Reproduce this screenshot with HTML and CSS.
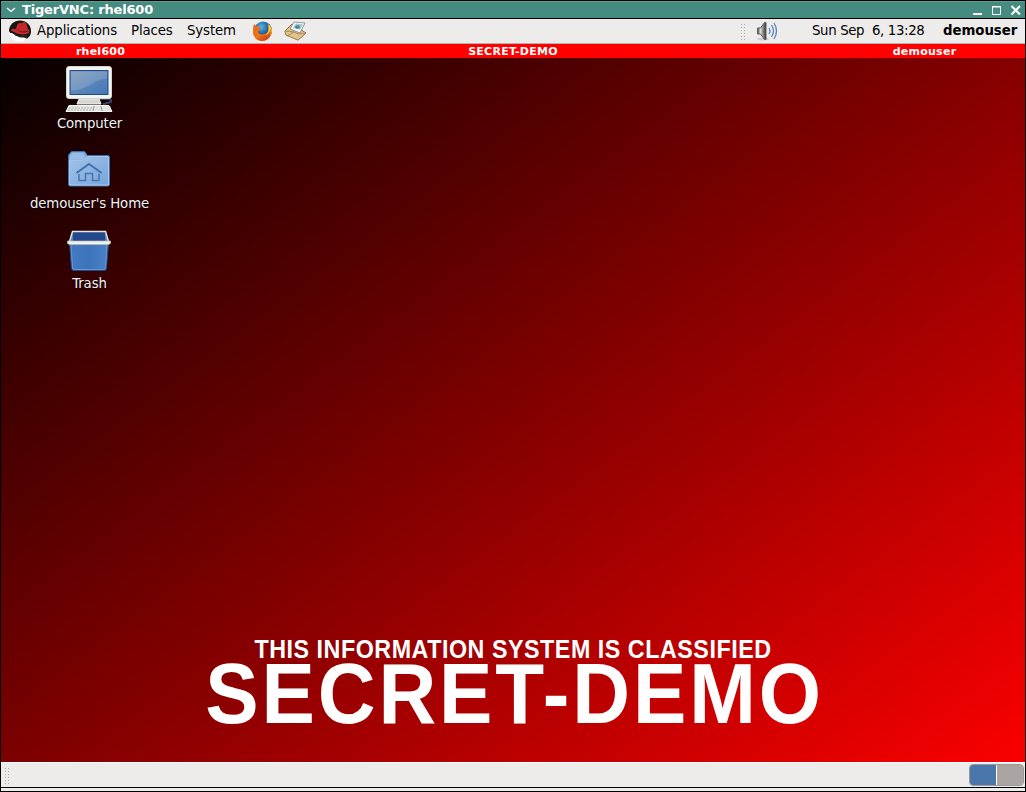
FILE: index.html
```html
<!DOCTYPE html>
<html lang="en">
<head>
<meta charset="utf-8">
<title>TigerVNC: rhel600</title>
<link rel="stylesheet" href="styles.css">
</head>
<body>
<div class="window">
  <header class="titlebar">
    <svg class="chevron" width="10" height="6" viewBox="0 0 10 6"><path d="M1 1l4 3.500L9 1" fill="none" stroke="#fff" stroke-width="1.300"/></svg>
    <span class="title">TigerVNC: rhel600</span>
    <svg class="controls" width="48" height="12" viewBox="0 0 48 12"><path d="M0 9h9v2H0z" fill="#fff"/><path d="M19.500 3v7.500h8V3zM19 2.500h9" fill="none" stroke="#fff"/><path d="M38.500 2l8.500 8.500M47 2l-8.500 8.500" stroke="#fff" stroke-width="2"/></svg>
  </header>
  <main class="screen">
    <nav class="panel">
      <svg class="hat" width="24" height="22" viewBox="0 0 24 22">
        <path d="M1 11C1 5 6 .5 12 .5S23 5 23 11c0 5-3 8-8 9L3 14z" fill="#151515"/>
        <path d="M1.500 13c.5 5 5 8.500 10.500 8.500 3 0 5-1 6.500-2.500L18 16l-6 1-5-2-3-2z" fill="#fff"/>
        <path d="M3 10c1-2 3-1 5-1 1-3 1-6 4-6 2 1 2-1 4-1 2 0 3 3 4 7 2 1 2 4-1 5-5 1-10 0-13-2-2-1-3-1-3-2z" fill="#c4292c"/>
        <path d="M8 8.500c2 3 7 4 12 2l.3 1C15 13.500 10 12 8 8.500z" fill="#62181a"/>
        <path d="M7 13.500c3 2 9 2.500 13 1l-2 4-2-1-4 0-2-1-3-1z" fill="#242424"/>
      </svg>
      <span class="menu apps">Applications</span><span class="menu places">Places</span><span class="menu system">System</span>
      <svg class="firefox" width="21" height="21" viewBox="0 0 21 21">
        <defs><linearGradient id="fox" x2=".7" y2="1"><stop stop-color="#e8651b"/><stop offset=".6" stop-color="#ee7417"/><stop offset="1" stop-color="#c83b17"/></linearGradient>
        <radialGradient id="globe" cx=".4" cy=".3"><stop stop-color="#51b7e6"/><stop offset="1" stop-color="#164982"/></radialGradient></defs>
        <circle cx="11" cy="9.500" r="9" fill="url(#globe)"/>
        <path d="M2 3l2 2 3-1-1 2 3 1-1 2-2 1c0 3 3 4 6 3 3 0 5-3 5-6l-1-4c4 3 5 7 3 11-2 4-5 6-9 6-5 0-9-4-9-9 0-3 0-5 1-8z" fill="url(#fox)"/>
        <path d="M16 3c4 3 5 8 2 12 1-3 1-5 0-7 0 3-2 6-5 6 4-2 4-7 3-11z" fill="#fbd13d"/>
      </svg>
      <svg class="mail" width="23" height="20" viewBox="0 0 23 20">
        <path d="M1 10l7-7 14 9-8 7L2 14z" fill="#e0bf87" stroke="#8c7450"/>
        <path d="M6 8l4-7 11 1-5 10z" fill="#f3f7f4" stroke="#77817b" stroke-width=".8"/>
        <path d="M9 7l3-4.500 7 1-3 5z" fill="#9cc4d8"/><ellipse cx="13.500" cy="6" rx="2.300" ry="1.700" fill="#3479aa"/><path d="M12 5l3-1-1 3z" fill="#69a05b"/>
        <path d="M1 10l9 1 4 2 8-1-8 7-12-5zM10 11l-7 4" fill="#e3c28b" stroke="#a0804f" stroke-width=".8"/>
      </svg>
      <span class="grip"></span>
      <svg class="volume" width="22" height="20" viewBox="0 0 22 20">
        <defs><linearGradient id="metal"><stop stop-color="#444"/><stop offset=".35" stop-color="#ddd"/><stop offset=".65" stop-color="#888"/><stop offset="1" stop-color="#333"/></linearGradient></defs>
        <ellipse cx="7" cy="18" rx="6" ry="1.500" fill="#ccc"/>
        <path d="M1.500 7h3l4-5.500h1.500v17H8.500L4.500 13h-3z" fill="url(#metal)" stroke="#5a5c59"/>
        <path d="M13 7q2 3 0 6M15.500 4q4 6 0 12M18 2q5 8 0 16" fill="none" stroke="#5682bb" stroke-width="1.300"/>
      </svg>
      <span class="clock">Sun Sep&nbsp; 6, 13:28</span>
      <strong class="user">demouser</strong>
    </nav>
    <div class="banner"><span class="host">rhel600</span><span class="level">SECRET-DEMO</span><span class="login">demouser</span></div>
    <section class="desktop">
      <div class="icons">
        <div class="launcher">
          <svg width="48" height="48" viewBox="0 0 48 48">
            <defs><linearGradient id="screen" y2="1"><stop stop-color="#7393bc"/><stop offset="1" stop-color="#4479b6"/></linearGradient><linearGradient id="shine" y2="1"><stop stop-color="#9caec8"/><stop offset="1" stop-color="#6f97c7"/></linearGradient></defs>
            <path d="M34 33h9q4 0 3 3l-7 2 1 3h6" fill="none" stroke="#31456d" stroke-width="2"/>
            <path d="M14 33h20l2 5H12z" fill="#d5d8d1" stroke="#eff0ec"/>
            <rect x="1.500" y=".5" width="45" height="32" rx="2.500" fill="#f4f5f1" stroke="#d2d5cd"/>
            <rect x="5" y="4.500" width="38" height="24" fill="url(#screen)" stroke="#204a87"/>
            <path d="M6 5.500h36v7c-12 0-20 12-36 12z" fill="url(#shine)" opacity=".65"/>
            <path d="M4 39.500h40l3 6H1z" fill="#e2e5df" stroke="#f6f7f4"/><path d="M4 42h24M3 44h24" stroke="#b6bbb3" stroke-dasharray="2 1"/><path d="M29 40l-1 5M36 40l1 5" stroke="#969b92"/>
          </svg><span>Computer</span>
        </div>
        <div class="launcher">
          <svg width="48" height="48" viewBox="0 0 48 48">
            <defs><linearGradient id="folder" y2="1"><stop stop-color="#a2c2e7"/><stop offset="1" stop-color="#78a6db"/></linearGradient></defs>
            <path d="M3.500 12V9l3-3.500h13l3 4h20.500q1.500 0 1.500 2v27q0 1.500-2 1.500H5q-1.500 0-1.500-2z" fill="#7ca7da" stroke="#3d70ae"/>
            <path d="M4.500 14h14l4-3.500h20.500q.5 0 .5 2v26.500H4.500z" fill="url(#folder)" stroke="#a9c8ed"/>
            <path d="M4.500 11l3-4h11l2 4-2 2h-14z" fill="#99bce5"/>
            <path d="M11.500 27l12.500-9 12.500 9" fill="none" stroke="#4170af" stroke-width="2"/>
            <path d="M14 28v6.500h6.500v-7h7v7H34V28" fill="none" stroke="#4775b2" stroke-width="1.500"/>
          </svg><span>demouser's Home</span>
        </div>
        <div class="launcher">
          <svg width="48" height="48" viewBox="0 0 48 48">
            <defs><linearGradient id="bin"><stop stop-color="#447bc2"/><stop offset=".5" stop-color="#3c73bb"/><stop offset="1" stop-color="#4b83c7"/></linearGradient></defs>
            <path d="M4.500 16h39l-2 26q0 2.500-2 2.500h-31q-2 0-2-2.500z" fill="url(#bin)" stroke="#204a87"/>
            <path d="M6 18l1.500 23.500q0 2 2 2h29q2 0 2-2L42 18" fill="none" stroke="#6698d2"/>
            <path d="M5 16L8 5h32l3 11z" fill="#24488b"/><path d="M5 16l3-10v10zM43 16L40 6v10z" fill="#5083bf"/>
            <path d="M4.500 15.500l3-10h33l3 10" fill="none" stroke="#e4e6e0" stroke-width="1.500"/>
            <path d="M2.500 15h43v2.500l-2 1h-39l-2-1z" fill="#f0f1ed" stroke="#b7bab3" stroke-width=".7"/>
          </svg><span>Trash</span>
        </div>
      </div>
      <div class="notice"><div class="statement">THIS INFORMATION SYSTEM IS CLASSIFIED</div><div class="classification">SECRET-DEMO</div></div>
    </section>
    <footer class="taskbar"><span class="grip"></span><div class="workspaces"><i class="current"></i><i></i></div></footer>
  </main>
  <div class="frame-bottom"></div>
</div>
</body>
</html>
```

FILE: styles.css
```css
* { box-sizing: border-box; }
body { margin: 0; font: 13.333px "DejaVu Sans", sans-serif; white-space: nowrap; }
svg { display: block; flex: none; }
.window { width: 1026px; height: 792px; border: 1px solid #000; overflow: hidden; }
.titlebar { height: 18px; display: flex; align-items: center; background: #458b7f; border-top: 1px solid #619c92; border-bottom: 1px solid #000; color: #fff; padding-left: 5px; }
.chevron { margin-right: 6px; }
.title { font-size: 13px; font-weight: bold; line-height: 16px; letter-spacing: -.18px; }
.controls { margin-left: auto; margin-right: 4px; }
.screen { height: 768px; display: flex; flex-direction: column; background: linear-gradient(to bottom right, #000, #f00); }
.panel { height: 25px; flex: none; display: flex; align-items: center; background: #edeceb; border-bottom: 1px solid #b5b3b0; color: #000; padding-left: 7px; }
.menu { flex: none; line-height: 22px; letter-spacing: -.12px; }
.apps { width: 99px; padding-left: 5px; }
.places { width: 56px; }
.system { width: 65px; }
.firefox { margin-right: 11px; }
.grip { flex: none; width: 5px; height: 17px; background: radial-gradient(circle, #aaa 0 .8px, transparent 1px) 0 0 / 3px 3px; }
.panel .grip { margin-left: 433px; }
.volume { margin-left: 11px; }
.clock { flex: none; margin-left: 34px; width: 131px; padding-bottom: 2px; letter-spacing: -.36px; }
.user { padding-bottom: 2px; letter-spacing: -.05px; }
.banner { height: 14px; flex: none; display: grid; grid-template-columns: 199px 626px 199px; text-align: center; background: #f00; color: #fff; font-size: 11px; font-weight: bold; line-height: 16px; letter-spacing: .25px; }
.login { margin-left: -2px; }
.desktop { height: 704px; flex: none; display: flex; flex-direction: column; justify-content: space-between; }
.icons { padding-top: 8px; margin-left: 23px; width: 130px; }
.launcher { height: 80px; display: flex; flex-direction: column; align-items: center; color: #f0f0f0; text-shadow: 1px 1px 1px #000; }
.launcher span { line-height: 20px; padding-left: 1px; letter-spacing: -.13px; }
.notice { text-align: center; color: #fff; font-family: "Liberation Sans", sans-serif; font-weight: bold; height: 128px; }
.statement { font-size: 23.3px; line-height: 30px; letter-spacing: .52px; padding-left: 0; transform: scaleY(1.1); }
.classification { font-size: 80px; line-height: 60px; letter-spacing: 2.9px; padding-left: 3px; transform: scaleY(1.06); }
.taskbar { height: 25px; flex: none; display: flex; align-items: center; background: #edeceb; border-top: 1px solid #fff; padding-left: 3px; }
.workspaces { display: flex; margin-left: auto; margin-right: 1px; width: 55px; height: 22px; border: 1px solid #999; border-radius: 4px; overflow: hidden; }
.workspaces i { flex: 1; background: #aaa5a1; }
.workspaces .current { background: #4b76ab; border-right: 1px solid #fff; }
.frame-bottom { height: 4px; background: #edeceb; border-top: 1px solid #000; }
```
